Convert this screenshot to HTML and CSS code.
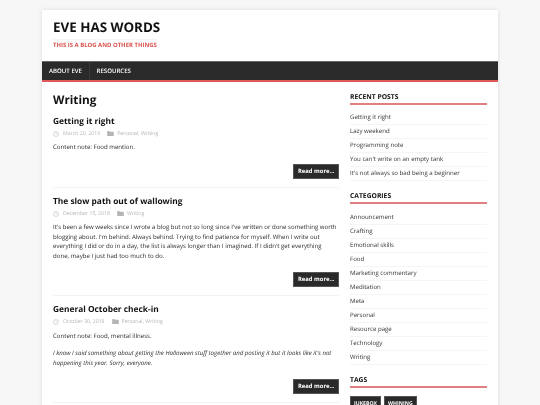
FILE: index.html
```html
<!DOCTYPE html>
<html lang="en">

<head>
    <meta charset="UTF-8" />
    <title>Eve Has Words</title>
    <link rel="stylesheet" href="styles.css">
</head>

<body>
    <svg class="icon-defs" width="0" height="0">
        <symbol id="clock" viewBox="0 0 12 12">
            <circle cx="6" cy="6" r="5" fill="none" stroke="currentColor" />
            <path d="M6 3v3.2h2.4" fill="none" stroke="currentColor" stroke-width=".8" />
        </symbol>
        <symbol id="folder" viewBox="0 0 12 10">
            <path d="M0 1.2C0 .5.5 0 1.2 0h2.6l1 1.3h6c.7 0 1.2.5 1.2 1.2v6.3c0 .7-.5 1.2-1.2 1.2H1.2C.5 10 0 9.5 0 8.8z" fill="currentColor" />
        </symbol>
    </svg>

    <div class="wrapper">
        <header class="site-header">
            <h1 class="site-title">EVE HAS WORDS</h1>
            <p class="site-tagline">THIS IS A BLOG AND OTHER THINGS</p>
        </header>

        <nav class="main-nav">
            <a href="#">ABOUT EVE</a>
            <a href="#">RESOURCES</a>
        </nav>

        <div class="content">
            <main class="posts">
                <h2 class="page-title">Writing</h2>

                <article class="post">
                    <h3 class="post-title">Getting it right</h3>
                    <p class="post-meta">
                        <svg class="meta-clock"><use href="#clock" /></svg><span class="meta-date">March 20, 2019</span>
                        <svg class="meta-folder"><use href="#folder" /></svg><span>Personal, Writing</span>
                    </p>
                    <p class="post-text">Content note: Food mention.</p>
                    <div class="more-row"><a class="more" href="#">Read more...</a></div>
                </article>

                <article class="post">
                    <h3 class="post-title">The slow path out of wallowing</h3>
                    <p class="post-meta">
                        <svg class="meta-clock"><use href="#clock" /></svg><span class="meta-date">December 15, 2018</span>
                        <svg class="meta-folder"><use href="#folder" /></svg><span>Writing</span>
                    </p>
                    <p class="post-text">It's been a few weeks since I wrote a blog but not so long since I've written or done something worth blogging about. I'm behind. Always behind. Trying to find patience for myself. When I write out everything I did or do in a day, the list is always longer than I imagined. If I didn't get everything done, maybe I just had too much to do.</p>
                    <div class="more-row"><a class="more" href="#">Read more...</a></div>
                </article>

                <article class="post">
                    <h3 class="post-title">General October check-in</h3>
                    <p class="post-meta">
                        <svg class="meta-clock"><use href="#clock" /></svg><span class="meta-date">October 30, 2018</span>
                        <svg class="meta-folder"><use href="#folder" /></svg><span>Personal, Writing</span>
                    </p>
                    <p class="post-text">Content note: Food, mental illness.</p>
                    <p class="post-text"><em>I know I said something about getting the Halloween stuff together and posting it but it looks like it's not happening this year. Sorry, everyone.</em></p>
                    <div class="more-row"><a class="more" href="#">Read more...</a></div>
                </article>
            </main>

            <aside class="sidebar">
                <section class="widget">
                    <h4 class="widget-title">RECENT POSTS</h4>
                    <ul class="widget-list">
                        <li>Getting it right</li>
                        <li>Lazy weekend</li>
                        <li>Programming note</li>
                        <li>You can't write on an empty tank</li>
                        <li>It's not always so bad being a beginner</li>
                    </ul>
                </section>

                <section class="widget">
                    <h4 class="widget-title">CATEGORIES</h4>
                    <ul class="widget-list">
                        <li>Announcement</li>
                        <li>Crafting</li>
                        <li>Emotional skills</li>
                        <li>Food</li>
                        <li>Marketing commentary</li>
                        <li>Meditation</li>
                        <li>Meta</li>
                        <li>Personal</li>
                        <li>Resource page</li>
                        <li>Technology</li>
                        <li>Writing</li>
                    </ul>
                </section>

                <section class="widget">
                    <h4 class="widget-title">TAGS</h4>
                    <div class="tags">
                        <a href="#">JUKEBOX</a>
                        <a href="#">WHINING</a>
                    </div>
                </section>
            </aside>
        </div>
    </div>
</body>

</html>
```

FILE: styles.css
```css
html,
body {
    height: 100%;
}

body {
    margin: 0;
    overflow: hidden;
    background: #f7f7f7;
    color: #2a2a2a;
    font-family: "Open Sans", "Liberation Sans", sans-serif;
    font-size: 6.1px;
    line-height: 9.4px;
    text-rendering: geometricPrecision;
}

p,
h1,
h2,
h3,
h4,
ul {
    margin: 0;
    padding: 0;
}

.icon-defs {
    display: none;
}

/* the reference is a scaled down capture, so everything is a bit soft */
.wrapper {
    width: 456px;
    margin: 10px auto 0;
    background: #fff;
    box-shadow: 0 0 4px rgba(0, 0, 0, .12);
    filter: blur(.35px);
}

/* header */
.site-header {
    height: 51px;
    padding: 0 11px;
    box-sizing: border-box;
}

.site-title {
    padding-top: 8px;
    color: #111;
    font-size: 13.4px;
    line-height: 19px;
    font-weight: 700;
}

.site-tagline {
    display: inline-block;
    margin-top: 1.7px;
    padding-top: 1.8px;
    border-top: 1px solid #f5f5f5;
    color: #d9534f;
    font-size: 5.95px;
    line-height: 9px;
    font-weight: 700;
}

.main-nav {
    display: flex;
    height: 18px;
    background: #2a2a2a;
    border-top: 1px solid #666;
    border-bottom: 2px solid #e05a5a;
}

.main-nav a {
    padding: 0 6.5px 0 7px;
    border-right: 1px solid #3a3a3a;
    color: #fff;
    font-size: 6.1px;
    line-height: 18px;
    font-weight: 600;
    text-decoration: none;
}

.main-nav a:last-child {
    border-right: 0;
}

/* main column */
.content {
    display: flex;
    justify-content: space-between;
    padding: 10px 11px 0;
}

.posts {
    width: 286px;
}

.page-title {
    color: #111;
    font-size: 11.8px;
    line-height: 16px;
    font-weight: 700;
}

.post {
    padding-bottom: 8px;
    margin-bottom: 8px;
    border-bottom: 1px solid #f2f2f2;
}

.post:first-of-type {
    margin-top: 8px;
}

.post-title {
    color: #111;
    font-size: 8.35px;
    line-height: 12px;
    font-weight: 700;
}

.post-meta {
    display: flex;
    align-items: center;
    margin-top: 1px;
    color: #b5b5b5;
    font-size: 5.2px;
    line-height: 9px;
}

.meta-clock {
    width: 6px;
    height: 6px;
    margin-right: 4px;
}

.meta-folder {
    width: 7px;
    height: 5.5px;
    margin: 0 3px 0 7px;
}

.post-text {
    margin-top: 4.3px;
}

.post-text + .post-text {
    margin-top: 8.3px;
}

.more-row {
    display: flex;
    justify-content: flex-end;
    margin-top: 12.3px;
}

.more {
    padding: 0 3.5px;
    background: #2a2a2a;
    border: 1px solid #555;
    color: #fff;
    font-size: 5.85px;
    line-height: 13px;
    font-weight: 700;
    text-decoration: none;
}

/* sidebar */
.sidebar {
    width: 137px;
    margin-top: -.5px;
}

.widget {
    margin-bottom: 9.75px;
}

.widget-title {
    padding-bottom: 1.5px;
    border-bottom: 2px solid #e08080;
    color: #111;
    font-size: 6.75px;
    line-height: 10px;
    font-weight: 700;
}

.widget-list {
    margin-top: 6px;
    list-style: none;
}

.widget-list li {
    padding: 2.25px 0;
    border-bottom: 1px solid #f5f5f5;
    line-height: 8.55px;
    color: #333;
}

.tags {
    display: flex;
    gap: 3px;
    margin-top: 7.7px;
}

.tags a {
    padding: 0 3px;
    background: #2a2a2a;
    border: 1px solid #555;
    color: #fff;
    font-size: 5.2px;
    line-height: 12px;
    font-weight: 700;
    text-decoration: none;
}
```
